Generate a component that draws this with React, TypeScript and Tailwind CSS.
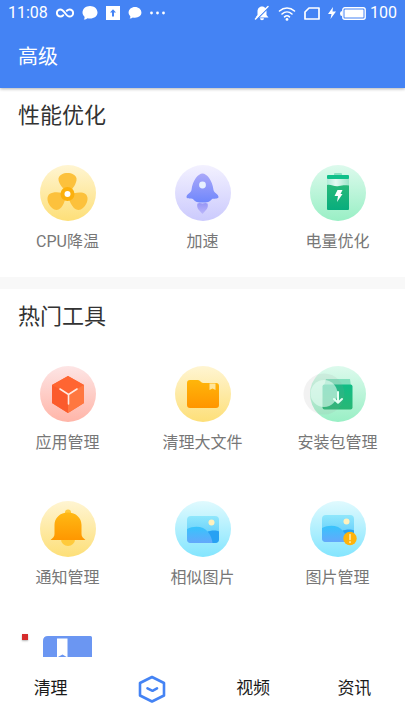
import type { ReactNode } from "react";

type Tool = { label: string; icon: ReactNode };

function Gradient({ id, from, to }: { id: string; from: string; to: string }) {
  return (
    <linearGradient id={id} x1="0" y1="0" x2="0" y2="1">
      <stop offset="0" stopColor={from} />
      <stop offset="1" stopColor={to} />
    </linearGradient>
  );
}

// Round 56px badge that every tool icon is drawn on.
function Badge({ id, from, to, children }: { id: string; from: string; to: string; children: ReactNode }) {
  return (
    <svg viewBox="0 0 56 56" className="block size-14 overflow-visible" aria-hidden="true">
      <defs>
        <Gradient id={id} from={from} to={to} />
      </defs>
      <circle cx="28" cy="28" r="28" fill={`url(#${id})`} />
      {children}
    </svg>
  );
}

const blade = "M28 28C23 24 18 18 18.500 13.500C19.500 6 35.500 6 36.500 13.500C37 18 33 24 28 28Z";

function FanIcon() {
  return (
    <Badge id="fan-bg" from="#fff5d2" to="#fddf78">
      <g fill="#fcc13c">
        <path d={blade} />
        <path d={blade} transform="rotate(120 27.500 29)" />
        <path d={blade} transform="rotate(240 27.500 29)" />
      </g>
      <circle cx="27.500" cy="29" r="7" fill="#fcb00c" />
      <circle cx="27.500" cy="29" r="3" fill="#fff" />
    </Badge>
  );
}

function RocketIcon() {
  return (
    <Badge id="rocket-bg" from="#f3f1ff" to="#cbcafd">
      <defs>
        <Gradient id="rocket-body" from="#aaa8f9" to="#6f87fc" />
        <Gradient id="rocket-fire" from="#9595f5" to="#bbb6fb" />
      </defs>
      <path d="M22.500 38.500C24 37.500 26 38 27.500 38.500C29 38 31 37.500 32.500 38.500C34 43 30.500 45.500 27.500 49C24.500 45.500 21 43 22.500 38.500Z" fill="url(#rocket-fire)" />
      <path d="M27.500 8.500C31.500 8.500 37.500 15 38.500 25C39 28 43.500 29 43.500 32C43.500 34 39 33.500 37 34C35 37 32 37.500 27.500 37.500C23 37.500 20 37 18 34C16 33.500 11.500 34 11.500 32C11.500 29 16 28 16.500 25C17.500 15 23.500 8.500 27.500 8.500Z" fill="url(#rocket-body)" />
      <circle cx="27.500" cy="20" r="3.400" fill="#e7f1ff" />
    </Badge>
  );
}

function BatteryIcon() {
  return (
    <Badge id="battery-bg" from="#ddfaed" to="#99efc5">
      <defs>
        <Gradient id="battery-fill" from="#28b97a" to="#08ad7d" />
        <linearGradient id="battery-glass">
          <stop offset="0" stopColor="#b1ead8" />
          <stop offset=".4" stopColor="#e6faf3" />
          <stop offset="1" stopColor="#9de4c9" />
        </linearGradient>
      </defs>
      <rect x="24" y="8" width="8" height="4" rx="1" fill="#8ce0c1" />
      <rect x="17" y="13" width="22" height="10" fill="url(#battery-glass)" />
      <rect x="17" y="10" width="22" height="4" rx="1" fill="#10c08a" />
      <path d="M17 20C21 19 24 22 29 21C33 20 35 20 39 20.500V44Q39 45 38 45H18Q17 45 17 44Z" fill="url(#battery-fill)" />
      <path d="M27.500 25H32.500L30.500 29H32.500L27 37L28 31H24.500Z" fill="#fff" />
    </Badge>
  );
}

function CubeIcon() {
  return (
    <Badge id="cube-bg" from="#fde5e5" to="#ffb5a8">
      <path d="M28 10L44 19V37L28 47L12 37V19Z" fill="#ff6b36" />
      <path d="M28 10L44 19L28 28L12 19Z" fill="#ff6532" />
      <path d="M12 19L28 28V47L12 37Z" fill="#fb5b2c" />
      <path d="M28 28L44 19V37L28 47Z" fill="#ff7740" />
      <path d="M20 23L28.500 28.500L37 23M28.500 28.500V38" fill="none" stroke="#ffe9e0" strokeWidth="1.600" strokeLinecap="round" />
    </Badge>
  );
}

function FolderIcon() {
  return (
    <Badge id="folder-bg" from="#fff5d2" to="#fddf78">
      <defs>
        <Gradient id="folder-body" from="#ffb60a" to="#ff9500" />
      </defs>
      <path d="M12 17Q12 14 15 14H22.500Q24 14 25 15L26 16Q27 17 28.500 17H41Q44 17 44 20V39Q44 42 41 42H15Q12 42 12 39Z" fill="url(#folder-body)" />
      <path d="M34.500 17.500H40.500V24L37.500 22.500L34.500 24Z" fill="#ffe59a" />
    </Badge>
  );
}

function PackageIcon() {
  return (
    <Badge id="package-bg" from="#ddfaed" to="#99efc5">
      <defs>
        <Gradient id="package-body" from="#10bd86" to="#29b775" />
      </defs>
      <path d="M16 13H40L41 20H14Z" fill="#83dfbd" />
      <rect x="12.500" y="18.500" width="30" height="25" rx="2" fill="url(#package-body)" />
      <circle cx="14" cy="28" r="20.500" fill="#9c9c9c" fillOpacity=".13" />
      <circle cx="14" cy="27.500" r="13.500" fill="#e8fff5" fillOpacity=".6" />
      <path d="M28 26V36.500M24 33L28 36.800L32 33" fill="none" stroke="#e4fff3" strokeWidth="2" strokeLinecap="round" strokeLinejoin="round" />
    </Badge>
  );
}

function BellIcon() {
  return (
    <Badge id="bell-bg" from="#fff5d2" to="#fddf78">
      <defs>
        <Gradient id="bell-body" from="#ffb914" to="#ff9700" />
      </defs>
      <circle cx="28" cy="11.500" r="3" fill="#ffca3c" />
      <path d="M21 38.500H35A7 6.500 0 0 1 21 38.500Z" fill="#ffca3c" />
      <path d="M28 11.500C36 11.500 41.500 17 41.500 24V33C41.500 35.500 43 37 45.500 39H10.500C13 37 14.500 35.500 14.500 33V24C14.500 17 20 11.500 28 11.500Z" fill="url(#bell-body)" />
    </Badge>
  );
}

function PictureIcon({ id, raised, alert }: { id: string; raised?: boolean; alert?: boolean }) {
  return (
    <Badge id={`${id}-bg`} from="#e0fafe" to="#83e5fe">
      <defs>
        <Gradient id={`${id}-sky`} from="#8fe7fc" to="#56c4fa" />
        <Gradient id={`${id}-hill`} from="#36c4fc" to="#64a8fb" />
        <clipPath id={`${id}-clip`}>
          <rect x="12" y="15" width="32" height="27" rx="4" />
        </clipPath>
      </defs>
      <g transform={raised ? "translate(0 -1)" : undefined}>
        <g clipPath={`url(#${id}-clip)`}>
          <rect x="12" y="15" width="32" height="27" fill={`url(#${id}-sky)`} />
          <path d="M32 31C35 29.500 41 29 44 30.500V42H32Z" fill="#28a1f3" />
          <path d="M12 28C20 24 29 25.500 33 31C36 35 37 38 37.500 42H12Z" fill={`url(#${id}-hill)`} />
        </g>
        <circle cx="36.500" cy="21.500" r="3" fill="#fff1bd" />
      </g>
      {alert && (
        <>
          <circle cx="40" cy="37.500" r="6.700" fill="#ffb30b" />
          <path d="M40 33.500V38.500M40 40.800V41.500" stroke="#fff0b8" strokeWidth="1.500" strokeLinecap="round" />
        </>
      )}
    </Badge>
  );
}

function ToolGrid({ tools, children }: { tools: Tool[]; children?: ReactNode }) {
  return (
    <div className="grid grid-cols-3">
      {tools.map((tool) => (
        <button key={tool.label} type="button" className="flex flex-col items-center gap-[9px] pt-[23px] pb-[23px]">
          {tool.icon}
          <span className="text-base leading-6 text-[#777777]">{tool.label}</span>
        </button>
      ))}
      {children}
    </div>
  );
}

const performance: Tool[] = [
  { label: "CPU降温", icon: <FanIcon /> },
  { label: "加速", icon: <RocketIcon /> },
  { label: "电量优化", icon: <BatteryIcon /> },
];

const popular: Tool[] = [
  { label: "应用管理", icon: <CubeIcon /> },
  { label: "清理大文件", icon: <FolderIcon /> },
  { label: "安装包管理", icon: <PackageIcon /> },
  { label: "通知管理", icon: <BellIcon /> },
  { label: "相似图片", icon: <PictureIcon id="similar" /> },
  { label: "图片管理", icon: <PictureIcon id="manage" raised alert /> },
];

const bubble = "M7.500 0C11.700 0 15 2.800 15 6.500C15 10.200 11.700 12.500 7.500 12.500C6.500 12.500 5.700 12.400 5 12.200C4 13.200 2.500 13.700 1.200 13.500C2 12.700 2.200 11.700 2 10.700C.800 9.600 0 8.200 0 6.500C0 2.800 3.300 0 7.500 0Z";

function StatusBar() {
  return (
    <div className="flex h-[26px] items-center justify-between px-2">
      <div className="flex items-center gap-2">
        <span className="text-base leading-6">11:08</span>
        <svg viewBox="0 0 20 12" className="h-3 w-[18px]" fill="none" stroke="currentColor" strokeWidth="2.200" strokeLinecap="round" aria-hidden="true">
          <path d="M8 8.500C7 9.500 6 10 5 10A4 4 0 0 1 5 2C9 2 11 10 15 10A4 4 0 0 0 15 2C14 2 13 2.500 12 3.500" />
        </svg>
        <svg viewBox="0 0 15 14" className="h-3.5 w-4" fill="currentColor" aria-hidden="true"><path d={bubble} /></svg>
        <svg viewBox="0 0 14 14" className="size-3.5" aria-hidden="true">
          <path d="M0 0H14V14H0Z" fill="currentColor" />
          <path d="M7 3.300L10 6.500H8V10.500H6V6.500H4Z" fill="#4483f4" />
        </svg>
        <svg viewBox="0 0 15 14" className="h-3 w-3.5" fill="currentColor" aria-hidden="true"><path d={bubble} /></svg>
        <svg viewBox="0 0 15 4" className="h-1 w-[15px]" fill="currentColor" aria-hidden="true">
          <circle cx="1.500" cy="2" r="1.400" /><circle cx="7.500" cy="2" r="1.400" /><circle cx="13.500" cy="2" r="1.400" />
        </svg>
      </div>
      <div className="flex items-center">
        <svg viewBox="0 0 16 16" className="mr-2 size-4" aria-hidden="true">
          <path d="M8 1.500C11 1.500 12.500 4 12.500 6.500V10L14.500 12.500H1.500L3.500 10V6.500C3.500 4 5 1.500 8 1.500ZM6 13.300H10A2 2 0 0 1 6 13.300Z" fill="currentColor" />
          <path d="M2.500 14.500L14.500 2.500" stroke="#4483f4" strokeWidth="1.500" />
          <path d="M1.500 14L14 1.500" stroke="currentColor" strokeWidth="1.500" strokeLinecap="round" />
        </svg>
        <svg viewBox="0 0 18 15" className="mr-2 h-[15px] w-[18px]" fill="none" stroke="currentColor" strokeWidth="1.600" strokeLinecap="round" aria-hidden="true">
          <path d="M1.500 5C6 1 12 1 16.500 5M4 8C7 5.300 11 5.300 14 8M6.500 10.800C8 9.500 10 9.500 11.500 10.800" />
          <circle cx="9" cy="13.400" r="1.400" fill="currentColor" stroke="none" />
        </svg>
        <svg viewBox="0 0 16 13" className="mr-2 h-[13px] w-4" fill="none" stroke="currentColor" strokeWidth="1.700" strokeLinejoin="round" aria-hidden="true">
          <path d="M5 1H15V12H1V5Z" />
        </svg>
        <svg viewBox="0 0 8 12" className="mr-1 h-3 w-2" fill="currentColor" aria-hidden="true"><path d="M5 0L0 7H3.500L2.500 12L8 4.500H4.500Z" /></svg>
        <svg viewBox="0 0 26 13" className="mr-1 h-[13px] w-[26px]" fill="currentColor" aria-hidden="true">
          <rect x="2.800" y=".800" width="22.400" height="11.400" rx="2" fill="none" stroke="currentColor" strokeWidth="1.400" />
          <rect x="4.500" y="2.500" width="19" height="8" rx=".500" />
          <path d="M2 4V9Q0 9 0 6.500Q0 4 2 4Z" />
        </svg>
        <span className="text-base leading-6">100</span>
      </div>
    </div>
  );
}

export default function App() {
  return (
    <div className="flex h-screen flex-col overflow-hidden bg-white font-[Roboto,'Noto_Sans_CJK_SC',sans-serif]">
      <header className="z-10 shrink-0 bg-[#4483f4] text-white shadow-[0_1px_3px_rgba(0,0,0,0.3)]">
        <StatusBar />
        <h1 className="flex h-[62px] items-center px-[18px] text-xl">高级</h1>
      </header>

      <main className="min-h-0 flex-1 overflow-hidden bg-[#f8f8f8]">
        <section className="bg-white">
          <h2 className="flex h-[54px] items-center px-[18px] text-[22px] text-[#333333]">性能优化</h2>
          <ToolGrid tools={performance} />
        </section>
        <section className="mt-3 bg-white">
          <h2 className="flex h-[54px] items-center px-[18px] text-[22px] text-[#333333]">热门工具</h2>
          <ToolGrid tools={popular}>
            <button type="button" aria-label="收藏" className="relative flex justify-center pt-[23px] pb-[23px]">
              <svg viewBox="0 0 49 49" className="size-[49px]" aria-hidden="true">
                <path d="M5 0H47.500Q49 0 49 1.500V47.500Q49 49 47.500 49H1.500Q0 49 0 47.500V5Q0 0 5 0Z" fill="#6b96f2" />
                <path d="M14 2.500H24.500V21.500L19.500 18.500L14 21.500Z" fill="#fff" />
              </svg>
              <span className="absolute top-[21px] left-[22px] size-1.5 bg-[#d52b2b] shadow-[0_1px_2px_rgba(0,0,0,0.3)]" />
            </button>
          </ToolGrid>
        </section>
      </main>

      <nav className="grid h-[63px] shrink-0 grid-cols-4 bg-white text-[17px] text-[#1a1a1a]">
        <button type="button">清理</button>
        <button type="button" aria-label="高级" className="flex items-center justify-center">
          <svg viewBox="0 0 28 28" className="size-7" fill="none" stroke="#4483f4" strokeWidth="2.600" strokeLinejoin="round" strokeLinecap="round" aria-hidden="true">
            <path d="M14 2L26 8V20.500L14 26.500L2 20.500V8Z" />
            <path d="M9.500 13.300L14.500 15.800L19 13.300" />
          </svg>
        </button>
        <button type="button">视频</button>
        <button type="button">资讯</button>
      </nav>
    </div>
  );
}
